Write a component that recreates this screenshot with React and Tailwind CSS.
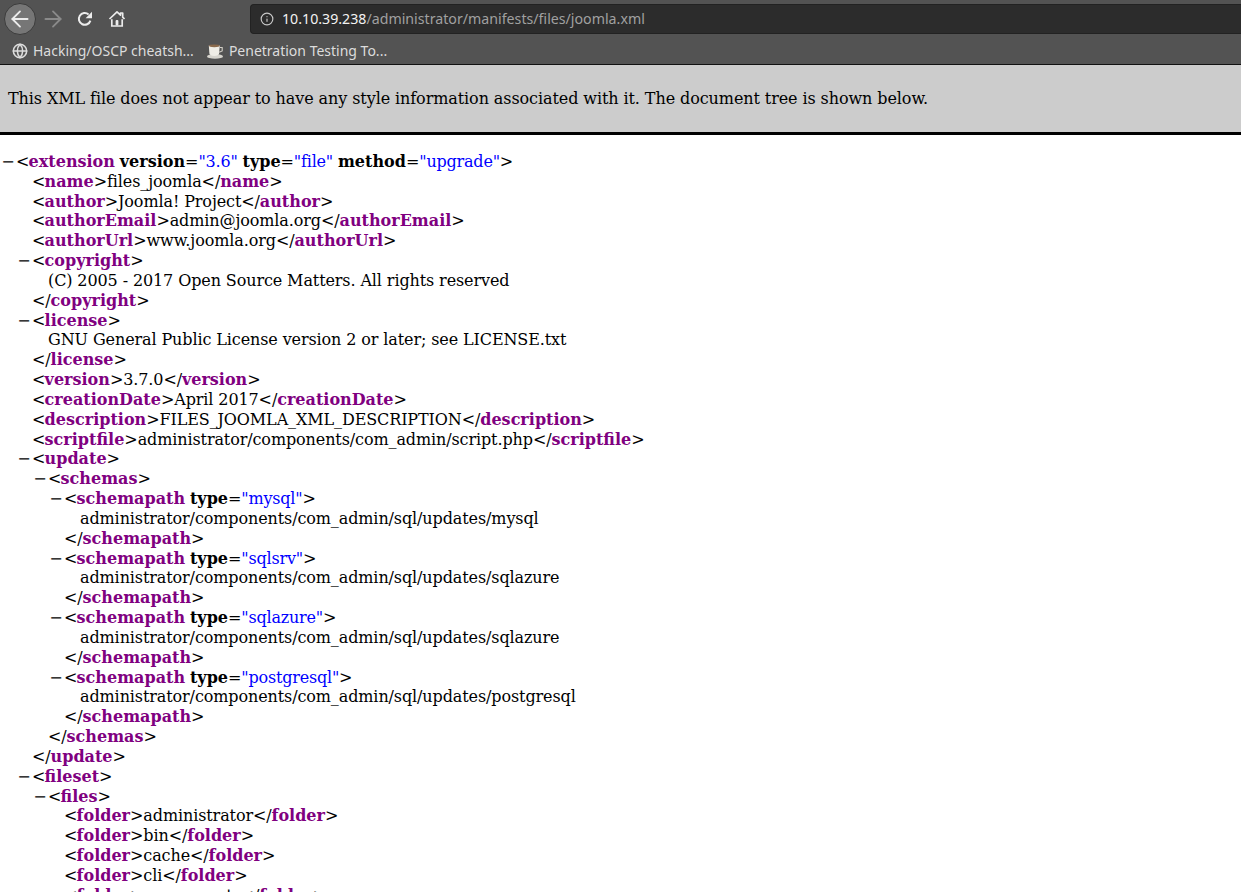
import { ArrowLeft, ArrowRight, Info, Globe } from 'lucide-react';

const serif = "font-['DejaVu_Serif',serif]";

function Tag({ name, close, attrs }) {
  return (
    <>
      {close ? '</' : <span className="tracking-[-0.8px]">{'<'}</span>}
      <span className="font-bold tracking-normal text-[#800080]">{name}</span>
      {attrs?.map(([k, v]) => (
        <span key={k}>
          <span className="tracking-[-0.2px]"> </span>
          <span className="font-bold tracking-normal">{k}</span>=
          <span className="tracking-[-0.2px] text-[#0000ff]">"{v}"</span>
        </span>
      ))}
      {'>'}
    </>
  );
}

function Leaf({ name, text }) {
  return (
    <div className="ml-4">
      <Tag name={name} />
      {text}
      <Tag name={name} close />
    </div>
  );
}

function Branch({ name, attrs, children, open }) {
  return (
    <div className="ml-4">
      <div className="-ml-4 flex whitespace-pre">
        <span className="w-4 shrink-0 text-center">−</span>
        <span>
          <Tag name={name} attrs={attrs} />
        </span>
      </div>
      {children}
      {!open && (
        <div>
          <Tag name={name} close />
        </div>
      )}
    </div>
  );
}

function Text({ children }) {
  return <div className="ml-4">{children}</div>;
}

function SchemaPath({ type, path }) {
  return (
    <Branch name="schemapath" attrs={[['type', type]]}>
      <Text>{path}</Text>
    </Branch>
  );
}

function ReloadIcon() {
  return (
    <svg width="16" height="16" viewBox="0 0 16 16" className="ml-[11px] text-[#ececec]">
      <path d="M13.4 9.6A5.9 5.9 0 1 1 11.6 3.4" fill="none" stroke="currentColor" strokeWidth="2" />
      <path d="M15 0.8V7.2H8.6z" fill="currentColor" />
    </svg>
  );
}

function HomeIcon() {
  return (
    <svg width="18" height="18" viewBox="0 0 18 18" className="ml-[15px] text-[#ececec]">
      <path
        d="M1.5 9 9 1.8 12.5 5.1V3h2.2v4.2L16.5 9"
        fill="none"
        stroke="currentColor"
        strokeWidth="1.7"
        strokeLinejoin="round"
      />
      <path d="M3.8 9.2V16h10.4V9.2" fill="none" stroke="currentColor" strokeWidth="1.7" />
      <rect x="7.6" y="10" width="2.8" height="5.5" rx="1" fill="currentColor" />
    </svg>
  );
}

function CupIcon() {
  return (
    <svg width="18" height="16" viewBox="0 0 18 16">
      <ellipse cx="9" cy="13.4" rx="8" ry="2.3" fill="#d6d4cd" />
      <path d="M2.8 2.5h11l-.7 8c-.3 1.6-2 2.4-4.8 2.4s-4.6-.8-4.9-2.4z" fill="#efede6" />
      <ellipse cx="8.3" cy="2.8" rx="5.4" ry="1.4" fill="#8a6a4c" />
      <path d="M13.8 4.5h2.4v3.4l-3 1.4" fill="none" stroke="#d2cfc6" strokeWidth="1.1" />
    </svg>
  );
}

function Toolbar() {
  return (
    <div className="h-[65px] border-b border-[#111] bg-[#535353] font-['Noto_Sans',sans-serif] text-[#e6e6e6]">
      <div className="flex h-[38px] items-center">
        <div className="ml-1 flex h-8 w-8 items-center justify-center rounded-full border border-[#3c3c3c] bg-[#767676]">
          <ArrowLeft size={26} strokeWidth={1.7} className="text-[#ececec]" />
        </div>
        <ArrowRight size={26} strokeWidth={1.7} className="ml-1 text-[#8a8a8a]" />
        <ReloadIcon />
        <HomeIcon />
        <div className="ml-[124px] flex h-[30px] flex-1 items-center rounded-l border border-r-0 border-[#222] bg-[#2c2c2c] pl-[9px] text-[14.2px]">
          <Info size={14} className="text-[#c8c8c8]" />
          <span className="ml-[8px] text-[#f2f2f2]">10.10.39.238</span>
          <span className="text-[#a0a0a0]">/administrator/manifests/files/joomla.xml</span>
        </div>
      </div>
      <div className="flex h-[25px] items-center text-[14px] text-[#dcdcdc]">
        <Globe size={16} strokeWidth={2.3} className="ml-3" />
        <span className="ml-[5px]">Hacking/OSCP cheatsh...</span>
        <span className="ml-[12px]">
          <CupIcon />
        </span>
        <span className="ml-[5px]">Penetration Testing To...</span>
      </div>
    </div>
  );
}

export default function App() {
  return (
    <div className={`h-[892px] overflow-hidden bg-white text-black ${serif}`}>
      <Toolbar />
      <div className="flex h-[70px] items-center border-b-[3px] border-black bg-[#cccccc] pl-2 text-[16px] tracking-[-0.09px]">
        This XML file does not appear to have any style information associated with it. The document tree is shown below.
      </div>
      <div className="pt-[17px] text-[16px] leading-[19.83px] tracking-[-0.11px]">
        <Branch name="extension" attrs={[['version', '3.6'], ['type', 'file'], ['method', 'upgrade']]} open>
          <Leaf name="name" text="files_joomla" />
          <Leaf name="author" text="Joomla! Project" />
          <Leaf name="authorEmail" text="admin@joomla.org" />
          <Leaf name="authorUrl" text="www.joomla.org" />
          <Branch name="copyright">
            <Text>(C) 2005 - 2017 Open Source Matters. All rights reserved</Text>
          </Branch>
          <Branch name="license">
            <Text>GNU General Public License version 2 or later; see LICENSE.txt</Text>
          </Branch>
          <Leaf name="version" text="3.7.0" />
          <Leaf name="creationDate" text="April 2017" />
          <Leaf name="description" text="FILES_JOOMLA_XML_DESCRIPTION" />
          <Leaf name="scriptfile" text="administrator/components/com_admin/script.php" />
          <Branch name="update">
            <Branch name="schemas">
              <SchemaPath type="mysql" path="administrator/components/com_admin/sql/updates/mysql" />
              <SchemaPath type="sqlsrv" path="administrator/components/com_admin/sql/updates/sqlazure" />
              <SchemaPath type="sqlazure" path="administrator/components/com_admin/sql/updates/sqlazure" />
              <SchemaPath type="postgresql" path="administrator/components/com_admin/sql/updates/postgresql" />
            </Branch>
          </Branch>
          <Branch name="fileset">
            <Branch name="files" open>
              <Leaf name="folder" text="administrator" />
              <Leaf name="folder" text="bin" />
              <Leaf name="folder" text="cache" />
              <Leaf name="folder" text="cli" />
              <Leaf name="folder" text="components" />
            </Branch>
          </Branch>
        </Branch>
      </div>
    </div>
  );
}
